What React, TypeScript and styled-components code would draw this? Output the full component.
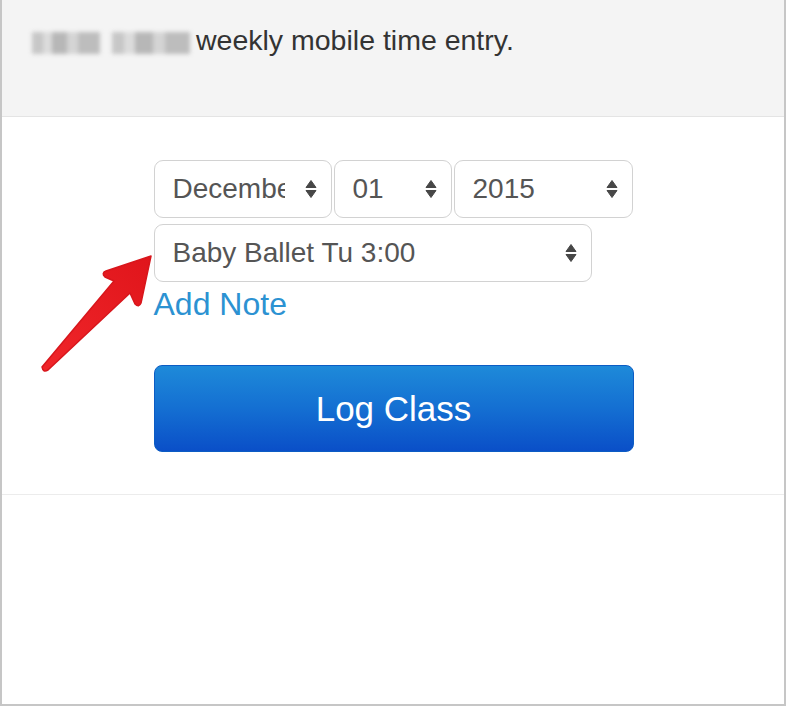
import { createGlobalStyle, styled } from "styled-components";

const GlobalStyle = createGlobalStyle`
    html, body {
        margin: 0;
        padding: 0;
        background: #ffffff;
    }
    body {
        font-family: "Liberation Sans", Arial, Helvetica, sans-serif;
    }
`;

const Frame = styled("div")`
    position: relative;
    box-sizing: border-box;
    width: 786px;
    height: 706px;
    border-left: 2px solid #c6c6c6;
    border-right: 2px solid #c6c6c6;
    border-bottom: 2px solid #c6c6c6;
    background: #ffffff;
    overflow: hidden;
`;

const Header = styled("div")`
    box-sizing: border-box;
    height: 117px;
    padding: 24px 0 0 30px;
    background: #f4f4f4;
    border-bottom: 1px solid #e4e4e4;
    display: flex;
    align-items: flex-start;
`;

const Intro = styled("div")`
    display: flex;
    align-items: center;
    height: 32px;
    font-size: 28.5px;
    line-height: 32px;
    color: #333333;
`;

const Blur = styled("span")<{ $w: number; $gap: number }>`
    display: inline-block;
    width: ${(p) => p.$w}px;
    height: 22px;
    margin-right: ${(p) => p.$gap}px;
    margin-top: 6px;
    background:
        linear-gradient(90deg, #bcbcbc 0 16%, #d6d6d6 16% 30%, #a8a8a8 30% 52%, #cdcdcd 52% 68%, #b0b0b0 68% 100%);
    filter: blur(2px);
    opacity: 0.8;
`;

const Main = styled("div")`
    padding: 43px 0 42px;
    border-bottom: 1px solid #ececec;
`;

const Form = styled("div")`
    width: 479px;
    margin: 0 auto;
    display: flex;
    flex-direction: column;
`;

const SelectRow = styled("div")`
    display: flex;
    gap: 2px;
`;

const SelectBox = styled("div")<{ $w: number }>`
    box-sizing: border-box;
    width: ${(p) => p.$w}px;
    height: 58px;
    padding: 0 11px 0 18px;
    display: flex;
    align-items: center;
    gap: 17px;
    border: 1px solid #d2d2d2;
    border-radius: 9px;
    background: #ffffff;
    color: #555555;
    font-size: 28px;
`;

const SelectLabel = styled("span")`
    flex: 1;
    min-width: 0;
    overflow: hidden;
    white-space: nowrap;
`;

const Spacer = styled("div")`
    height: 6px;
`;

const AddNote = styled("a")`
    display: block;
    margin-top: 4px;
    font-size: 32px;
    line-height: 36px;
    color: #2c92d2;
    text-decoration: none;
`;

const LogButton = styled("button")`
    box-sizing: border-box;
    margin-top: 43px;
    width: 480px;
    height: 87px;
    border: 1px solid #0c5cc4;
    border-radius: 8px;
    background: linear-gradient(180deg, #1e8ad9 0%, #146fd2 50%, #0a4fc8 100%);
    color: #ffffff;
    font-family: "Liberation Sans", Arial, sans-serif;
    font-size: 35px;
    cursor: pointer;
`;

const Pointer = styled("svg")`
    position: absolute;
    left: 0;
    top: 0;
    pointer-events: none;
`;

const Arrows = () => (
    <svg width="18" height="20" viewBox="0 0 18 20">
        <path d="M9 1.5 L14 8.5 L4 8.5 Z" fill="#474747" stroke="#474747" strokeWidth="1" strokeLinejoin="round" />
        <path d="M9 18.5 L14 11.5 L4 11.5 Z" fill="#474747" stroke="#474747" strokeWidth="1" strokeLinejoin="round" />
    </svg>
);

const Select = ({ w, value }: { w: number; value: string }) => (
    <SelectBox $w={w}>
        <SelectLabel>{value}</SelectLabel>
        <Arrows />
    </SelectBox>
);

export default function App() {
    return (
        <>
            <GlobalStyle />
            <Frame>
                <Header>
                    <Intro>
                        <Blur $w={68} $gap={12} />
                        <Blur $w={78} $gap={6} />
                        weekly mobile time entry.
                    </Intro>
                </Header>
                <Main>
                    <Form>
                        <SelectRow>
                            <Select w={178} value="December" />
                            <Select w={118} value="01" />
                            <Select w={179} value="2015" />
                        </SelectRow>
                        <Spacer />
                        <SelectRow>
                            <Select w={438} value="Baby Ballet Tu 3:00" />
                        </SelectRow>
                        <AddNote href="#">Add Note</AddNote>
                        <LogButton>Log Class</LogButton>
                    </Form>
                </Main>
                <Pointer width="786" height="706" viewBox="0 0 786 706">
                    <defs>
                        <linearGradient id="red" x1="0" y1="1" x2="1" y2="0">
                            <stop offset="0" stopColor="#f0262a" />
                            <stop offset="1" stopColor="#e0151b" />
                        </linearGradient>
                    </defs>
                    <path
                        d="M149 256 L139 303 Q137 308 133 304 L128 293 L46 370 Q41 373 40 367 L112 281 L103 277 Q99 273 104 271 Z"
                        fill="url(#red)"
                        stroke="#d8161c"
                        strokeWidth="1.5"
                        strokeLinejoin="round"
                    />
                </Pointer>
            </Frame>
        </>
    );
}
